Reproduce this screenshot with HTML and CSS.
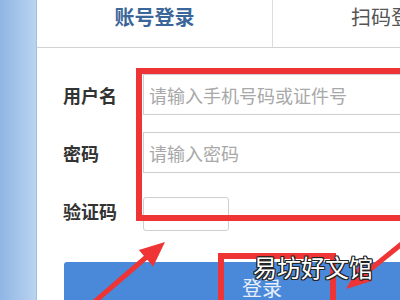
FILE: index.html
```html
<!DOCTYPE html>
<html lang="zh-CN">
<head>
<meta charset="utf-8">
<link rel="stylesheet" href="styles.css">
</head>
<body>
<div class="page">
  <div class="side"></div>
  <div class="panel">
    <div class="tabs">
      <div class="tab active">账号登录</div>
      <div class="tab">扫码登录</div>
    </div>
    <div class="form">
      <div class="row">
        <label class="label">用户名</label>
        <input class="field" type="text" placeholder="请输入手机号码或证件号">
      </div>
      <div class="row">
        <label class="label">密码</label>
        <input class="field" type="password" placeholder="请输入密码">
      </div>
      <div class="row">
        <label class="label">验证码</label>
        <input class="field captcha" type="text">
      </div>
      <div class="btn-row">
        <button class="btn">登录</button>
      </div>
    </div>
  </div>
</div>
<div class="mark mark-form"></div>
<div class="mark mark-btn"></div>
<svg class="arrows" width="400" height="300" viewBox="0 0 400 300">
  <line x1="92" y1="304" x2="150" y2="254" stroke="#ee3434" stroke-width="5" stroke-linecap="round"/>
  <polygon points="165,242 138.8,250 153.2,266.6" fill="#ee3434"/>
  <line x1="404" y1="242" x2="362" y2="276" stroke="#ee3434" stroke-width="5" stroke-linecap="round"/>
  <polygon points="346,289 359,265.5 371.7,281" fill="#ee3434"/>
</svg>
<div class="watermark">易坊好文馆</div>
</body>
</html>
```
FILE: styles.css
```css
* { box-sizing: border-box; }
html, body {
  margin: 0;
  padding: 0;
  width: 400px;
  height: 300px;
  overflow: hidden;
  background: #ffffff;
  font-family: "Noto Sans CJK SC", "Noto Sans", sans-serif;
}
.page {
  display: flex;
  width: 400px;
  height: 300px;
  overflow: hidden;
}
.side {
  width: 37px;
  flex: none;
  background: linear-gradient(to right, #8fb6e4, #bad3f0);
  border-right: 1px solid #a3bfe2;
}
.panel {
  flex: 1;
  min-width: 0;
  overflow: hidden;
  background: #ffffff;
}
.tabs {
  display: flex;
  height: 48px;
  border-bottom: 1px solid #d2d2d2;
  width: 480px;
}
.tab {
  width: 236px;
  flex: none;
  text-align: center;
  font-size: 20px;
  line-height: 28px;
  padding-top: 3px;
  color: #555555;
}
.tab.active {
  color: #3b6699;
  font-weight: bold;
  border-right: 1px solid #dcdcdc;
}
.form {
  padding: 26px 0 0 26px;
  display: flex;
  flex-direction: column;
  gap: 17px;
}
.row {
  display: flex;
  align-items: center;
  height: 41px;
}
.label {
  width: 80px;
  flex: none;
  font-size: 18px;
  font-weight: bold;
  color: #333333;
}
.field {
  width: 300px;
  flex: none;
  height: 41px;
  border: 1px solid #cfcfcf;
  padding: 0 0 0 5px;
  font-family: inherit;
  font-size: 18px;
  color: #333;
  outline: none;
  background: #fff;
}
.field::placeholder { color: #a8a8a8; }
.field.captcha {
  width: 86px;
  border-radius: 3px;
  height: 34px;
  align-self: flex-end;
}
.btn-row {
  padding-top: 14px;
  padding-left: 1px;
}
.btn {
  width: 396px;
  height: 52px;
  border: none;
  border-radius: 3px;
  background: #4a89d9;
  color: #e6effa;
  font-family: inherit;
  font-size: 20px;
  line-height: 52px;
  padding: 0;
  text-align: center;
}
.mark {
  position: absolute;
  border: 6px solid #ee3434;
}
.mark-form {
  left: 136px;
  top: 68px;
  width: 290px;
  height: 153px;
}
.mark-btn {
  left: 218px;
  top: 253px;
  width: 118px;
  height: 70px;
}
.arrows {
  position: absolute;
  left: 0;
  top: 0;
}
.watermark {
  position: absolute;
  left: 253px;
  top: 251px;
  font-size: 24px;
  line-height: 32px;
  color: #ffffff;
  text-shadow: -1px -1px 0 #222, 1px -1px 0 #222, -1px 1px 0 #222, 1px 1px 0 #222, 0 1px 0 #222, 0 -1px 0 #222, 1px 0 0 #222, -1px 0 0 #222;
}
```
